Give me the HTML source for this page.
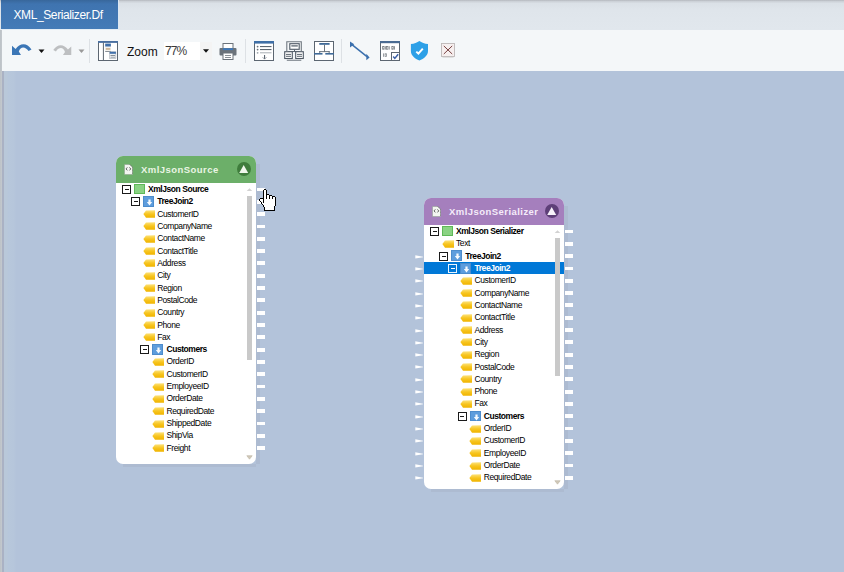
<!DOCTYPE html><html><head><meta charset="utf-8"><style>

*{margin:0;padding:0;box-sizing:border-box}
html,body{width:844px;height:572px;overflow:hidden}
body{position:relative;background:#b3c3da;font-family:"Liberation Sans",sans-serif}
.abs{position:absolute}
#topbar{position:absolute;left:0;top:0;width:844px;height:30px;background:linear-gradient(#b4b8be 0px,#cdd2d8 1.5px,#dbe1e7 3.5px,#dfe5eb 10px,#e1e7ed 29px)}
#tab{position:absolute;left:1px;top:0;width:118px;height:30px;background:linear-gradient(#38679b 0px,#3f74b0 4px,#4278b4 20px,#447bb7 29px);border-right:1px solid #dbe7f3;border-bottom:1px solid #e4edf5;padding-top:0;color:#fff;font-size:12px;line-height:31px;padding-left:12.5px;letter-spacing:-0.4px}
#toolbar{position:absolute;left:0;top:30px;width:844px;height:41px;background:#f4f7f9}
#lstrip{position:absolute;left:0;top:30px;width:2px;height:542px;background:linear-gradient(90deg,#bcc2c7 0px,#c2c7cc 1.5px,#c2c7cc 2px)}
#canvasl{position:absolute;left:2px;top:71px;width:14px;height:501px;background:linear-gradient(90deg,#aab2c4 0px,#aab2c4 1.5px,#b9c8d9 2px,#b9c8d9 5px,#b7c7db 6px,#b6c6db 12px,#b3c3da 14px)}
.sep{position:absolute;top:39px;width:1px;height:24px;background:#dde1e5}
.node{position:absolute;background:#fff;border-radius:7px;overflow:hidden}
.hdr{position:absolute;left:0;top:0;width:100%;height:27px}
.doc{position:absolute;left:8.3px;top:7.5px}
.ttl{position:absolute;left:25px;top:0;height:27px;line-height:27px;font-weight:bold;font-size:9.5px;letter-spacing:0.45px}
.btn{position:absolute;right:5px;top:6px;width:14px;height:14px;border-radius:7px}
.btn svg{position:absolute;left:0;top:0}
.shr{position:absolute;width:3.5px;background:#adbbd1}
.shb{position:absolute;height:3px;background:#adbbd1}
.row{position:absolute;left:0;width:100%;height:12.32px}
.tx{position:absolute;top:0;font-size:8.5px;line-height:12.32px;color:#000;white-space:nowrap;letter-spacing:-0.4px}
.row.b .tx{font-weight:bold;font-size:8.5px;letter-spacing:-0.45px}
.row.s .tx{color:#fff;-webkit-text-stroke:0}
.cb{position:absolute;top:2px;width:9px;height:9px;border:1px solid #1a1a1a;background:#fff}
.cb::after{content:"";position:absolute;left:1.5px;top:3px;width:4px;height:1px;background:#1a1a1a}
.row.s .cb{border-color:#e8f4ff;background:#0078d7}
.row.s .cb::after{background:#fff}
.ig{position:absolute;top:0.9px;width:10.6px;height:10.6px;background:#8ad283;border:1px solid #5fb858}
.ib{position:absolute;top:0.8px;width:10.8px;height:10.8px;background:#5e9ddd;border:0.6px solid #4d8ccc}
.ib svg{position:absolute;left:0;top:0}
.il{position:absolute;top:2.5px;width:12px;height:8px}
.il svg{position:absolute;left:0;top:0}
.sel{position:absolute;left:0;width:100%;height:12.32px;background:#0078d7}
.thumb{position:absolute;width:5px;background:#c9c9c9}
.sa{position:absolute}
.pr{position:absolute;width:8.3px;height:3.8px;background:#fff}
.pl{position:absolute}

</style></head><body>
<svg width="0" height="0" style="position:absolute"><defs><linearGradient id="yg" x1="0" y1="0" x2="0" y2="1"><stop offset="0" stop-color="#fde27a"/><stop offset="0.5" stop-color="#f7c520"/><stop offset="1" stop-color="#f0b400"/></linearGradient></defs></svg>
<div id="topbar"></div>
<div id="tab">XML_Serializer.Df</div>
<div id="toolbar"></div>
<div id="canvasl"></div>
<div id="lstrip"></div>
<svg class="abs" style="left:11px;top:43px" width="21" height="13" viewBox="0 0 21 13"><path d="M1,2.8 L4.6,6 C8.5,0.3 15.8,-1.2 20.5,6.6 L17.6,8 C14,3 9.5,3.4 7.8,8.6 L10,12 L1,12 Z" fill="#3b76b6"/></svg>
<svg class="abs" style="left:38px;top:49px" width="7" height="5" viewBox="0 0 7 5"><path d="M0.5,0.5 H6.5 L3.5,4 Z" fill="#111"/></svg>
<svg class="abs" style="left:52px;top:44px" width="21" height="12" viewBox="0 0 21 13"><path d="M20,2.8 L16.4,6 C12.5,0.3 5.2,-1.2 0.5,6.6 L3.4,8 C7,3 11.5,3.4 13.2,8.6 L11,12 L20,12 Z" fill="#bdbfc1"/></svg>
<svg class="abs" style="left:78px;top:49px" width="7" height="5" viewBox="0 0 7 5"><path d="M0.5,0.5 H6.5 L3.5,4 Z" fill="#9a9a9a"/></svg>
<div class="sep" style="left:89px"></div>
<svg class="abs" style="left:98px;top:41px" width="20" height="20" viewBox="0 0 20 20"><rect x="0.5" y="0.5" width="19" height="19" fill="#fff" stroke="#5c6671"/><rect x="0" y="0" width="20" height="1.9" fill="#4a6fa0"/><rect x="4.9" y="1.5" width="1" height="18" fill="#5c6671"/><rect x="7.2" y="2.6" width="5.7" height="8" fill="#f4f1ec"/><rect x="7.2" y="2.6" width="5.7" height="2.9" fill="#4170aa"/><rect x="7.8" y="7.2" width="4.5" height="1.5" fill="#c9ab86"/><rect x="7.2" y="10" width="5.7" height="0.8" fill="#6f7880"/><rect x="11.7" y="10.8" width="6.2" height="6.8" fill="#eef1f4" stroke="#9aa2aa" stroke-width="0.5"/><rect x="11.7" y="10.8" width="6.2" height="2" fill="#4170aa"/><rect x="12.5" y="14" width="4.6" height="0.8" fill="#6f7880"/><rect x="12.5" y="15.8" width="4.6" height="0.8" fill="#8a929a"/></svg>
<div class="abs" style="left:127px;top:42.5px;font-size:12px;line-height:18px;color:#111">Zoom</div>
<div class="abs" style="left:164px;top:42px;width:48px;height:18px;background:#fff"></div>
<div class="abs" style="left:200px;top:42px;width:12px;height:18px;background:#f4f4f4"></div>
<div class="abs" style="left:165px;top:42px;font-size:12px;line-height:18px;color:#3a3a3a;letter-spacing:-0.9px">77%</div>
<svg class="abs" style="left:203px;top:49px" width="6" height="4" viewBox="0 0 6 4"><path d="M0,0.3 H6 L3,3.8 Z" fill="#111"/></svg>
<svg class="abs" style="left:219px;top:43px" width="18" height="17" viewBox="0 0 18 17"><rect x="4" y="0.5" width="10" height="5" fill="#fff" stroke="#6b737b"/><rect x="0.5" y="5" width="17" height="7.5" rx="1" fill="#6b737b"/><rect x="4" y="5.3" width="10" height="1.8" fill="#3b78bb"/><rect x="4" y="10" width="10" height="6.5" fill="#fff" stroke="#6b737b"/><line x1="6" y1="12.5" x2="12" y2="12.5" stroke="#6b737b" stroke-width="0.8"/><line x1="6" y1="14.5" x2="12" y2="14.5" stroke="#6b737b" stroke-width="0.8"/></svg>
<div class="sep" style="left:245px"></div>
<svg class="abs" style="left:254px;top:41px" width="20" height="20" viewBox="0 0 20 20"><rect x="0.5" y="0.5" width="19" height="19" fill="#fff" stroke="#5c6671"/><rect x="0" y="0" width="20" height="2.6" fill="#3f6fa6"/><circle cx="3.6" cy="5.6" r="0.9" fill="#6a737c"/><rect x="6" y="5" width="11.5" height="1.1" fill="#5c6671"/><circle cx="3.6" cy="8.6" r="0.9" fill="#6a737c"/><rect x="6" y="8" width="11.5" height="1.1" fill="#5c6671"/><circle cx="3.6" cy="11.8" r="0.9" fill="#9aa2aa"/><rect x="6" y="11.3" width="11.5" height="1" fill="#a8aeb4"/><rect x="10" y="14" width="1.1" height="4" fill="#5c6671"/><path d="M8.6,16.2 L10.55,18.2 L12.5,16.2" fill="none" stroke="#7a838c" stroke-width="0.7"/></svg>
<svg class="abs" style="left:284px;top:41px" width="20" height="20" viewBox="0 0 20 20"><path d="M2.8,10 V0.8 H17.3 V10 M2.8,19.3 H17.3" fill="none" stroke="#6f7880" stroke-width="1.1"/><rect x="5.8" y="2.7" width="9.4" height="5.6" fill="#fff" stroke="#4f5a65" stroke-width="1.1"/><rect x="7.3" y="4.3" width="6.5" height="1.2" fill="#4f5a65"/><path d="M10.5,8.3 V10.5 M4.3,10.5 H15.7" fill="none" stroke="#5c6671" stroke-width="1"/><rect x="0.7" y="10.7" width="7.6" height="6.8" fill="#fff" stroke="#4f5a65" stroke-width="1.1"/><rect x="11.7" y="10.7" width="7.6" height="6.8" fill="#fff" stroke="#4f5a65" stroke-width="1.1"/><rect x="2" y="12.9" width="5" height="1" fill="#5c6671"/><rect x="2" y="14.8" width="5" height="1" fill="#5c6671"/><rect x="13" y="12.9" width="5" height="1" fill="#5c6671"/><rect x="13" y="14.8" width="5" height="1" fill="#5c6671"/></svg>
<svg class="abs" style="left:314px;top:41px" width="20" height="20" viewBox="0 0 20 20"><rect x="0.5" y="0.5" width="19" height="19" fill="#fff" stroke="#5c6671"/><rect x="5.3" y="2" width="10.3" height="1.8" fill="#3f6a98"/><rect x="10" y="3.7" width="0.9" height="7" fill="#5c6671"/><rect x="5.3" y="10.2" width="10.3" height="0.9" fill="#5c6671"/><rect x="5.3" y="10.2" width="0.9" height="2" fill="#5c6671"/><rect x="14.7" y="10.2" width="0.9" height="2" fill="#5c6671"/><rect x="0" y="12" width="8.5" height="1.6" fill="#3f6a98"/><rect x="11.3" y="12" width="8.7" height="1.6" fill="#3f6a98"/></svg>
<div class="sep" style="left:341px"></div>
<svg class="abs" style="left:349px;top:41px" width="21" height="20" viewBox="0 0 21 20"><line x1="3" y1="3.6" x2="18" y2="15.6" stroke="#3a6fad" stroke-width="1.5"/><path d="M1,0.5 L1,6.5 L5.2,3.2 Z" fill="#3a6fad"/><path d="M17.3,12.8 L17.3,19.2 L20.6,16.4 Z" fill="#3a6fad"/></svg>
<svg class="abs" style="left:380px;top:41px" width="20" height="20" viewBox="0 0 20 20"><rect x="0.5" y="0.5" width="19" height="19" fill="#fff" stroke="#5c6671"/><rect x="0" y="0" width="20" height="2.2" fill="#4a6b92"/><rect x="2.65" y="5.55" width="1.4" height="2.7" fill="none" stroke="#70767c" stroke-width="0.75"/><rect x="4.8999999999999995" y="5.2" width="0.8" height="3.4" fill="#70767c"/><rect x="6.55" y="5.55" width="1.4" height="2.7" fill="none" stroke="#70767c" stroke-width="0.75"/><rect x="8.8" y="5.2" width="0.8" height="3.4" fill="#70767c"/><rect x="11.85" y="5.55" width="1.4" height="2.7" fill="none" stroke="#70767c" stroke-width="0.75"/><rect x="14.100000000000001" y="5.2" width="0.8" height="3.4" fill="#70767c"/><rect x="3" y="12.4" width="0.8" height="3.4" fill="#80868c"/><rect x="5.05" y="12.75" width="1.4" height="2.7" fill="none" stroke="#80868c" stroke-width="0.75"/><rect x="11.5" y="11.5" width="8" height="8" fill="#fff" stroke="#5c6671"/><path d="M13.2,15.6 L14.8,17.4 L18.2,13.2" fill="none" stroke="#3b5fa6" stroke-width="1.5"/></svg>
<svg class="abs" style="left:410px;top:41px" width="19" height="20" viewBox="0 0 19 20"><path d="M9.4,0 C11.5,1.6 14.8,2.8 18,3 V10 C18,14.5 13.8,17.8 9.4,19.6 C5,17.8 0.9,14.5 0.9,10 V3 C4.1,2.8 7.3,1.6 9.4,0 Z" fill="#2da0e7"/><path d="M6.3,10.6 L8.4,12.6 L12.8,7.6" fill="none" stroke="#fff" stroke-width="2"/></svg>
<svg class="abs" style="left:441px;top:43px" width="14" height="15" viewBox="0 0 14 15"><rect x="0.5" y="0.5" width="13" height="13" fill="#f6efef" stroke="#bdb8b8" stroke-width="0.9"/><path d="M2.8,2.9 L11.2,11 M11.2,2.9 L2.8,11" stroke="#6b2f2f" stroke-width="0.9"/><line x1="1.5" y1="14.4" x2="12.5" y2="14.4" stroke="#d6d6d6" stroke-width="0.8"/></svg>
<div class="shr" style="left:256px;top:164px;height:299.5px"></div>
<div class="shb" style="left:123px;top:463.5px;width:133px"></div>
<div class="node" style="left:116px;top:156px;width:140px;height:307.5px">
<div class="hdr" style="background:#6caf69">
<svg class="doc" width="9" height="11" viewBox="0 0 9 11"><path d="M0.5,0.5 H5.8 L8.5,3.2 V10.5 H0.5 Z" fill="#f3f5f1" stroke="#8a9a88" stroke-width="0.5"/><path d="M5.8,0.5 L8.5,3.2" stroke="#555" stroke-width="0.7" stroke-dasharray="0.8,0.6"/><path d="M8.5,3.2 V10.5" stroke="#6a6f6a" stroke-width="0.6" stroke-dasharray="0.8,0.7"/><path d="M3.3,3.4 L2.1,4.9 L3.3,6.4 M5.5,3.4 L6.7,4.9 L5.5,6.4" fill="none" stroke="#3a3a3a" stroke-width="0.8"/></svg>
<div class="ttl" style="color:#eaf5e4">XmlJsonSource</div>
<div class="btn" style="background:#3f7d3c"><svg width="14" height="14" viewBox="0 0 14 14"><path d="M6.7,2.9 L11.2,11 L2.2,11 Z" fill="#f0f7ec"/></svg></div>
</div>
<div class="row b" style="top:27.00px">
<div class="cb" style="left:6.00px"></div>
<div class="ig" style="left:18.00px"></div>
<div class="tx" style="left:32.00px">XmlJson Source</div>
</div>
<div class="row b" style="top:39.32px">
<div class="cb" style="left:15.24px"></div>
<div class="ib" style="left:27.24px"><svg width="11" height="11" viewBox="0 0 11 11"><path d="M4.4,2.6 H6.6 V5 H8.2 L5.5,8.4 L2.8,5 H4.4 Z" fill="#fff" opacity="0.95"/></svg></div>
<div class="tx" style="left:41.24px">TreeJoin2</div>
</div>
<div class="row" style="top:51.64px">
<div class="il" style="left:26.84px"><svg class="lf" width="12" height="8" viewBox="0 0 12 8"><path d="M0.4,3.9 L3,0.4 L12,0.3 L12,7.7 L3,7.7 Z" fill="url(#yg)"/></svg></div>
<div class="tx" style="left:41.24px">CustomerID</div>
</div>
<div class="row" style="top:63.96px">
<div class="il" style="left:26.84px"><svg class="lf" width="12" height="8" viewBox="0 0 12 8"><path d="M0.4,3.9 L3,0.4 L12,0.3 L12,7.7 L3,7.7 Z" fill="url(#yg)"/></svg></div>
<div class="tx" style="left:41.24px">CompanyName</div>
</div>
<div class="row" style="top:76.28px">
<div class="il" style="left:26.84px"><svg class="lf" width="12" height="8" viewBox="0 0 12 8"><path d="M0.4,3.9 L3,0.4 L12,0.3 L12,7.7 L3,7.7 Z" fill="url(#yg)"/></svg></div>
<div class="tx" style="left:41.24px">ContactName</div>
</div>
<div class="row" style="top:88.60px">
<div class="il" style="left:26.84px"><svg class="lf" width="12" height="8" viewBox="0 0 12 8"><path d="M0.4,3.9 L3,0.4 L12,0.3 L12,7.7 L3,7.7 Z" fill="url(#yg)"/></svg></div>
<div class="tx" style="left:41.24px">ContactTitle</div>
</div>
<div class="row" style="top:100.92px">
<div class="il" style="left:26.84px"><svg class="lf" width="12" height="8" viewBox="0 0 12 8"><path d="M0.4,3.9 L3,0.4 L12,0.3 L12,7.7 L3,7.7 Z" fill="url(#yg)"/></svg></div>
<div class="tx" style="left:41.24px">Address</div>
</div>
<div class="row" style="top:113.24px">
<div class="il" style="left:26.84px"><svg class="lf" width="12" height="8" viewBox="0 0 12 8"><path d="M0.4,3.9 L3,0.4 L12,0.3 L12,7.7 L3,7.7 Z" fill="url(#yg)"/></svg></div>
<div class="tx" style="left:41.24px">City</div>
</div>
<div class="row" style="top:125.56px">
<div class="il" style="left:26.84px"><svg class="lf" width="12" height="8" viewBox="0 0 12 8"><path d="M0.4,3.9 L3,0.4 L12,0.3 L12,7.7 L3,7.7 Z" fill="url(#yg)"/></svg></div>
<div class="tx" style="left:41.24px">Region</div>
</div>
<div class="row" style="top:137.88px">
<div class="il" style="left:26.84px"><svg class="lf" width="12" height="8" viewBox="0 0 12 8"><path d="M0.4,3.9 L3,0.4 L12,0.3 L12,7.7 L3,7.7 Z" fill="url(#yg)"/></svg></div>
<div class="tx" style="left:41.24px">PostalCode</div>
</div>
<div class="row" style="top:150.20px">
<div class="il" style="left:26.84px"><svg class="lf" width="12" height="8" viewBox="0 0 12 8"><path d="M0.4,3.9 L3,0.4 L12,0.3 L12,7.7 L3,7.7 Z" fill="url(#yg)"/></svg></div>
<div class="tx" style="left:41.24px">Country</div>
</div>
<div class="row" style="top:162.52px">
<div class="il" style="left:26.84px"><svg class="lf" width="12" height="8" viewBox="0 0 12 8"><path d="M0.4,3.9 L3,0.4 L12,0.3 L12,7.7 L3,7.7 Z" fill="url(#yg)"/></svg></div>
<div class="tx" style="left:41.24px">Phone</div>
</div>
<div class="row" style="top:174.84px">
<div class="il" style="left:26.84px"><svg class="lf" width="12" height="8" viewBox="0 0 12 8"><path d="M0.4,3.9 L3,0.4 L12,0.3 L12,7.7 L3,7.7 Z" fill="url(#yg)"/></svg></div>
<div class="tx" style="left:41.24px">Fax</div>
</div>
<div class="row b" style="top:187.16px">
<div class="cb" style="left:24.48px"></div>
<div class="ib" style="left:36.48px"><svg width="11" height="11" viewBox="0 0 11 11"><path d="M4.4,2.6 H6.6 V5 H8.2 L5.5,8.4 L2.8,5 H4.4 Z" fill="#fff" opacity="0.95"/></svg></div>
<div class="tx" style="left:50.48px">Customers</div>
</div>
<div class="row" style="top:199.48px">
<div class="il" style="left:36.08px"><svg class="lf" width="12" height="8" viewBox="0 0 12 8"><path d="M0.4,3.9 L3,0.4 L12,0.3 L12,7.7 L3,7.7 Z" fill="url(#yg)"/></svg></div>
<div class="tx" style="left:50.48px">OrderID</div>
</div>
<div class="row" style="top:211.80px">
<div class="il" style="left:36.08px"><svg class="lf" width="12" height="8" viewBox="0 0 12 8"><path d="M0.4,3.9 L3,0.4 L12,0.3 L12,7.7 L3,7.7 Z" fill="url(#yg)"/></svg></div>
<div class="tx" style="left:50.48px">CustomerID</div>
</div>
<div class="row" style="top:224.12px">
<div class="il" style="left:36.08px"><svg class="lf" width="12" height="8" viewBox="0 0 12 8"><path d="M0.4,3.9 L3,0.4 L12,0.3 L12,7.7 L3,7.7 Z" fill="url(#yg)"/></svg></div>
<div class="tx" style="left:50.48px">EmployeeID</div>
</div>
<div class="row" style="top:236.44px">
<div class="il" style="left:36.08px"><svg class="lf" width="12" height="8" viewBox="0 0 12 8"><path d="M0.4,3.9 L3,0.4 L12,0.3 L12,7.7 L3,7.7 Z" fill="url(#yg)"/></svg></div>
<div class="tx" style="left:50.48px">OrderDate</div>
</div>
<div class="row" style="top:248.76px">
<div class="il" style="left:36.08px"><svg class="lf" width="12" height="8" viewBox="0 0 12 8"><path d="M0.4,3.9 L3,0.4 L12,0.3 L12,7.7 L3,7.7 Z" fill="url(#yg)"/></svg></div>
<div class="tx" style="left:50.48px">RequiredDate</div>
</div>
<div class="row" style="top:261.08px">
<div class="il" style="left:36.08px"><svg class="lf" width="12" height="8" viewBox="0 0 12 8"><path d="M0.4,3.9 L3,0.4 L12,0.3 L12,7.7 L3,7.7 Z" fill="url(#yg)"/></svg></div>
<div class="tx" style="left:50.48px">ShippedDate</div>
</div>
<div class="row" style="top:273.40px">
<div class="il" style="left:36.08px"><svg class="lf" width="12" height="8" viewBox="0 0 12 8"><path d="M0.4,3.9 L3,0.4 L12,0.3 L12,7.7 L3,7.7 Z" fill="url(#yg)"/></svg></div>
<div class="tx" style="left:50.48px">ShipVia</div>
</div>
<div class="row" style="top:285.72px">
<div class="il" style="left:36.08px"><svg class="lf" width="12" height="8" viewBox="0 0 12 8"><path d="M0.4,3.9 L3,0.4 L12,0.3 L12,7.7 L3,7.7 Z" fill="url(#yg)"/></svg></div>
<div class="tx" style="left:50.48px">Freight</div>
</div>
<svg class="sa" style="left:130px;top:31px" width="7" height="5" viewBox="0 0 7 5"><path d="M3.5,1.3 L6.3,4.1 L0.7,4.1 Z" fill="#d2d2d2"/></svg>
<div class="thumb" style="left:131px;top:40px;height:164px"></div>
<svg class="sa" style="left:130px;top:298.5px" width="7" height="5" viewBox="0 0 7 5"><path d="M0.8,0.7 L6.2,0.7 L3.5,4.2 Z" fill="#d0c8b8" stroke="#bdb5a5" stroke-width="0.6"/></svg>
</div>
<div class="pr" style="left:256.7px;top:187.56px"></div>
<div class="pr" style="left:256.7px;top:199.88px"></div>
<div class="pr" style="left:256.7px;top:212.20px"></div>
<div class="pr" style="left:256.7px;top:224.52px"></div>
<div class="pr" style="left:256.7px;top:236.84px"></div>
<div class="pr" style="left:256.7px;top:249.16px"></div>
<div class="pr" style="left:256.7px;top:261.48px"></div>
<div class="pr" style="left:256.7px;top:273.80px"></div>
<div class="pr" style="left:256.7px;top:286.12px"></div>
<div class="pr" style="left:256.7px;top:298.44px"></div>
<div class="pr" style="left:256.7px;top:310.76px"></div>
<div class="pr" style="left:256.7px;top:323.08px"></div>
<div class="pr" style="left:256.7px;top:335.40px"></div>
<div class="pr" style="left:256.7px;top:347.72px"></div>
<div class="pr" style="left:256.7px;top:360.04px"></div>
<div class="pr" style="left:256.7px;top:372.36px"></div>
<div class="pr" style="left:256.7px;top:384.68px"></div>
<div class="pr" style="left:256.7px;top:397.00px"></div>
<div class="pr" style="left:256.7px;top:409.32px"></div>
<div class="pr" style="left:256.7px;top:421.64px"></div>
<div class="pr" style="left:256.7px;top:433.96px"></div>
<div class="pr" style="left:256.7px;top:446.28px"></div>
<div class="shr" style="left:564px;top:206px;height:282.5px"></div>
<div class="shb" style="left:431px;top:488.5px;width:133px"></div>
<div class="node" style="left:424px;top:198px;width:140px;height:290.5px">
<div class="hdr" style="background:#a57fbd">
<svg class="doc" width="9" height="11" viewBox="0 0 9 11"><path d="M0.5,0.5 H5.8 L8.5,3.2 V10.5 H0.5 Z" fill="#f3f5f1" stroke="#8a9a88" stroke-width="0.5"/><path d="M5.8,0.5 L8.5,3.2" stroke="#555" stroke-width="0.7" stroke-dasharray="0.8,0.6"/><path d="M8.5,3.2 V10.5" stroke="#6a6f6a" stroke-width="0.6" stroke-dasharray="0.8,0.7"/><path d="M3.3,3.4 L2.1,4.9 L3.3,6.4 M5.5,3.4 L6.7,4.9 L5.5,6.4" fill="none" stroke="#3a3a3a" stroke-width="0.8"/></svg>
<div class="ttl" style="color:#f5ecfa">XmlJsonSerializer</div>
<div class="btn" style="background:#5e3f78"><svg width="14" height="14" viewBox="0 0 14 14"><path d="M6.7,2.9 L11.2,11 L2.2,11 Z" fill="#f7f2fa"/></svg></div>
</div>
<div class="sel" style="top:63.96px"></div>
<div class="row b" style="top:27.00px">
<div class="cb" style="left:6.00px"></div>
<div class="ig" style="left:18.00px"></div>
<div class="tx" style="left:32.00px">XmlJson Serializer</div>
</div>
<div class="row" style="top:39.32px">
<div class="il" style="left:17.60px"><svg class="lf" width="12" height="8" viewBox="0 0 12 8"><path d="M0.4,3.9 L3,0.4 L12,0.3 L12,7.7 L3,7.7 Z" fill="url(#yg)"/></svg></div>
<div class="tx" style="left:32.00px">Text</div>
</div>
<div class="row b" style="top:51.64px">
<div class="cb" style="left:15.24px"></div>
<div class="ib" style="left:27.24px"><svg width="11" height="11" viewBox="0 0 11 11"><path d="M4.4,2.6 H6.6 V5 H8.2 L5.5,8.4 L2.8,5 H4.4 Z" fill="#fff" opacity="0.95"/></svg></div>
<div class="tx" style="left:41.24px">TreeJoin2</div>
</div>
<div class="row b s" style="top:63.96px">
<div class="cb" style="left:24.48px"></div>
<div class="ib" style="left:36.48px"><svg width="11" height="11" viewBox="0 0 11 11"><path d="M4.4,2.6 H6.6 V5 H8.2 L5.5,8.4 L2.8,5 H4.4 Z" fill="#fff" opacity="0.95"/></svg></div>
<div class="tx" style="left:50.48px">TreeJoin2</div>
</div>
<div class="row" style="top:76.28px">
<div class="il" style="left:36.08px"><svg class="lf" width="12" height="8" viewBox="0 0 12 8"><path d="M0.4,3.9 L3,0.4 L12,0.3 L12,7.7 L3,7.7 Z" fill="url(#yg)"/></svg></div>
<div class="tx" style="left:50.48px">CustomerID</div>
</div>
<div class="row" style="top:88.60px">
<div class="il" style="left:36.08px"><svg class="lf" width="12" height="8" viewBox="0 0 12 8"><path d="M0.4,3.9 L3,0.4 L12,0.3 L12,7.7 L3,7.7 Z" fill="url(#yg)"/></svg></div>
<div class="tx" style="left:50.48px">CompanyName</div>
</div>
<div class="row" style="top:100.92px">
<div class="il" style="left:36.08px"><svg class="lf" width="12" height="8" viewBox="0 0 12 8"><path d="M0.4,3.9 L3,0.4 L12,0.3 L12,7.7 L3,7.7 Z" fill="url(#yg)"/></svg></div>
<div class="tx" style="left:50.48px">ContactName</div>
</div>
<div class="row" style="top:113.24px">
<div class="il" style="left:36.08px"><svg class="lf" width="12" height="8" viewBox="0 0 12 8"><path d="M0.4,3.9 L3,0.4 L12,0.3 L12,7.7 L3,7.7 Z" fill="url(#yg)"/></svg></div>
<div class="tx" style="left:50.48px">ContactTitle</div>
</div>
<div class="row" style="top:125.56px">
<div class="il" style="left:36.08px"><svg class="lf" width="12" height="8" viewBox="0 0 12 8"><path d="M0.4,3.9 L3,0.4 L12,0.3 L12,7.7 L3,7.7 Z" fill="url(#yg)"/></svg></div>
<div class="tx" style="left:50.48px">Address</div>
</div>
<div class="row" style="top:137.88px">
<div class="il" style="left:36.08px"><svg class="lf" width="12" height="8" viewBox="0 0 12 8"><path d="M0.4,3.9 L3,0.4 L12,0.3 L12,7.7 L3,7.7 Z" fill="url(#yg)"/></svg></div>
<div class="tx" style="left:50.48px">City</div>
</div>
<div class="row" style="top:150.20px">
<div class="il" style="left:36.08px"><svg class="lf" width="12" height="8" viewBox="0 0 12 8"><path d="M0.4,3.9 L3,0.4 L12,0.3 L12,7.7 L3,7.7 Z" fill="url(#yg)"/></svg></div>
<div class="tx" style="left:50.48px">Region</div>
</div>
<div class="row" style="top:162.52px">
<div class="il" style="left:36.08px"><svg class="lf" width="12" height="8" viewBox="0 0 12 8"><path d="M0.4,3.9 L3,0.4 L12,0.3 L12,7.7 L3,7.7 Z" fill="url(#yg)"/></svg></div>
<div class="tx" style="left:50.48px">PostalCode</div>
</div>
<div class="row" style="top:174.84px">
<div class="il" style="left:36.08px"><svg class="lf" width="12" height="8" viewBox="0 0 12 8"><path d="M0.4,3.9 L3,0.4 L12,0.3 L12,7.7 L3,7.7 Z" fill="url(#yg)"/></svg></div>
<div class="tx" style="left:50.48px">Country</div>
</div>
<div class="row" style="top:187.16px">
<div class="il" style="left:36.08px"><svg class="lf" width="12" height="8" viewBox="0 0 12 8"><path d="M0.4,3.9 L3,0.4 L12,0.3 L12,7.7 L3,7.7 Z" fill="url(#yg)"/></svg></div>
<div class="tx" style="left:50.48px">Phone</div>
</div>
<div class="row" style="top:199.48px">
<div class="il" style="left:36.08px"><svg class="lf" width="12" height="8" viewBox="0 0 12 8"><path d="M0.4,3.9 L3,0.4 L12,0.3 L12,7.7 L3,7.7 Z" fill="url(#yg)"/></svg></div>
<div class="tx" style="left:50.48px">Fax</div>
</div>
<div class="row b" style="top:211.80px">
<div class="cb" style="left:33.72px"></div>
<div class="ib" style="left:45.72px"><svg width="11" height="11" viewBox="0 0 11 11"><path d="M4.4,2.6 H6.6 V5 H8.2 L5.5,8.4 L2.8,5 H4.4 Z" fill="#fff" opacity="0.95"/></svg></div>
<div class="tx" style="left:59.72px">Customers</div>
</div>
<div class="row" style="top:224.12px">
<div class="il" style="left:45.32px"><svg class="lf" width="12" height="8" viewBox="0 0 12 8"><path d="M0.4,3.9 L3,0.4 L12,0.3 L12,7.7 L3,7.7 Z" fill="url(#yg)"/></svg></div>
<div class="tx" style="left:59.72px">OrderID</div>
</div>
<div class="row" style="top:236.44px">
<div class="il" style="left:45.32px"><svg class="lf" width="12" height="8" viewBox="0 0 12 8"><path d="M0.4,3.9 L3,0.4 L12,0.3 L12,7.7 L3,7.7 Z" fill="url(#yg)"/></svg></div>
<div class="tx" style="left:59.72px">CustomerID</div>
</div>
<div class="row" style="top:248.76px">
<div class="il" style="left:45.32px"><svg class="lf" width="12" height="8" viewBox="0 0 12 8"><path d="M0.4,3.9 L3,0.4 L12,0.3 L12,7.7 L3,7.7 Z" fill="url(#yg)"/></svg></div>
<div class="tx" style="left:59.72px">EmployeeID</div>
</div>
<div class="row" style="top:261.08px">
<div class="il" style="left:45.32px"><svg class="lf" width="12" height="8" viewBox="0 0 12 8"><path d="M0.4,3.9 L3,0.4 L12,0.3 L12,7.7 L3,7.7 Z" fill="url(#yg)"/></svg></div>
<div class="tx" style="left:59.72px">OrderDate</div>
</div>
<div class="row" style="top:273.40px">
<div class="il" style="left:45.32px"><svg class="lf" width="12" height="8" viewBox="0 0 12 8"><path d="M0.4,3.9 L3,0.4 L12,0.3 L12,7.7 L3,7.7 Z" fill="url(#yg)"/></svg></div>
<div class="tx" style="left:59.72px">RequiredDate</div>
</div>
<svg class="sa" style="left:130px;top:31px" width="7" height="5" viewBox="0 0 7 5"><path d="M3.5,1.3 L6.3,4.1 L0.7,4.1 Z" fill="#d2d2d2"/></svg>
<div class="thumb" style="left:131px;top:40px;height:138px"></div>
<svg class="sa" style="left:130px;top:281.5px" width="7" height="5" viewBox="0 0 7 5"><path d="M0.8,0.7 L6.2,0.7 L3.5,4.2 Z" fill="#d0c8b8" stroke="#bdb5a5" stroke-width="0.6"/></svg>
</div>
<div class="pr" style="left:564.7px;top:229.56px"></div>
<div class="pr" style="left:564.7px;top:241.88px"></div>
<div class="pr" style="left:564.7px;top:254.20px"></div>
<div class="pr" style="left:564.7px;top:266.52px"></div>
<div class="pr" style="left:564.7px;top:278.84px"></div>
<div class="pr" style="left:564.7px;top:291.16px"></div>
<div class="pr" style="left:564.7px;top:303.48px"></div>
<div class="pr" style="left:564.7px;top:315.80px"></div>
<div class="pr" style="left:564.7px;top:328.12px"></div>
<div class="pr" style="left:564.7px;top:340.44px"></div>
<div class="pr" style="left:564.7px;top:352.76px"></div>
<div class="pr" style="left:564.7px;top:365.08px"></div>
<div class="pr" style="left:564.7px;top:377.40px"></div>
<div class="pr" style="left:564.7px;top:389.72px"></div>
<div class="pr" style="left:564.7px;top:402.04px"></div>
<div class="pr" style="left:564.7px;top:414.36px"></div>
<div class="pr" style="left:564.7px;top:426.68px"></div>
<div class="pr" style="left:564.7px;top:439.00px"></div>
<div class="pr" style="left:564.7px;top:451.32px"></div>
<div class="pr" style="left:564.7px;top:463.64px"></div>
<div class="pr" style="left:564.7px;top:475.96px"></div>
<svg class="pl" style="left:414.5px;top:254.60px" width="9" height="4" viewBox="0 0 9 4"><path d="M0.3,0.2 L8,1.7 L8,2.3 L0.3,3.5 Z" fill="#fff"/></svg>
<svg class="pl" style="left:414.5px;top:266.92px" width="9" height="4" viewBox="0 0 9 4"><path d="M0.3,0.2 L8,1.7 L8,2.3 L0.3,3.5 Z" fill="#fff"/></svg>
<svg class="pl" style="left:414.5px;top:279.24px" width="9" height="4" viewBox="0 0 9 4"><path d="M0.3,0.2 L8,1.7 L8,2.3 L0.3,3.5 Z" fill="#fff"/></svg>
<svg class="pl" style="left:414.5px;top:291.56px" width="9" height="4" viewBox="0 0 9 4"><path d="M0.3,0.2 L8,1.7 L8,2.3 L0.3,3.5 Z" fill="#fff"/></svg>
<svg class="pl" style="left:414.5px;top:303.88px" width="9" height="4" viewBox="0 0 9 4"><path d="M0.3,0.2 L8,1.7 L8,2.3 L0.3,3.5 Z" fill="#fff"/></svg>
<svg class="pl" style="left:414.5px;top:316.20px" width="9" height="4" viewBox="0 0 9 4"><path d="M0.3,0.2 L8,1.7 L8,2.3 L0.3,3.5 Z" fill="#fff"/></svg>
<svg class="pl" style="left:414.5px;top:328.52px" width="9" height="4" viewBox="0 0 9 4"><path d="M0.3,0.2 L8,1.7 L8,2.3 L0.3,3.5 Z" fill="#fff"/></svg>
<svg class="pl" style="left:414.5px;top:340.84px" width="9" height="4" viewBox="0 0 9 4"><path d="M0.3,0.2 L8,1.7 L8,2.3 L0.3,3.5 Z" fill="#fff"/></svg>
<svg class="pl" style="left:414.5px;top:353.16px" width="9" height="4" viewBox="0 0 9 4"><path d="M0.3,0.2 L8,1.7 L8,2.3 L0.3,3.5 Z" fill="#fff"/></svg>
<svg class="pl" style="left:414.5px;top:365.48px" width="9" height="4" viewBox="0 0 9 4"><path d="M0.3,0.2 L8,1.7 L8,2.3 L0.3,3.5 Z" fill="#fff"/></svg>
<svg class="pl" style="left:414.5px;top:377.80px" width="9" height="4" viewBox="0 0 9 4"><path d="M0.3,0.2 L8,1.7 L8,2.3 L0.3,3.5 Z" fill="#fff"/></svg>
<svg class="pl" style="left:414.5px;top:390.12px" width="9" height="4" viewBox="0 0 9 4"><path d="M0.3,0.2 L8,1.7 L8,2.3 L0.3,3.5 Z" fill="#fff"/></svg>
<svg class="pl" style="left:414.5px;top:402.44px" width="9" height="4" viewBox="0 0 9 4"><path d="M0.3,0.2 L8,1.7 L8,2.3 L0.3,3.5 Z" fill="#fff"/></svg>
<svg class="pl" style="left:414.5px;top:414.76px" width="9" height="4" viewBox="0 0 9 4"><path d="M0.3,0.2 L8,1.7 L8,2.3 L0.3,3.5 Z" fill="#fff"/></svg>
<svg class="pl" style="left:414.5px;top:427.08px" width="9" height="4" viewBox="0 0 9 4"><path d="M0.3,0.2 L8,1.7 L8,2.3 L0.3,3.5 Z" fill="#fff"/></svg>
<svg class="pl" style="left:414.5px;top:439.40px" width="9" height="4" viewBox="0 0 9 4"><path d="M0.3,0.2 L8,1.7 L8,2.3 L0.3,3.5 Z" fill="#fff"/></svg>
<svg class="pl" style="left:414.5px;top:451.72px" width="9" height="4" viewBox="0 0 9 4"><path d="M0.3,0.2 L8,1.7 L8,2.3 L0.3,3.5 Z" fill="#fff"/></svg>
<svg class="pl" style="left:414.5px;top:464.04px" width="9" height="4" viewBox="0 0 9 4"><path d="M0.3,0.2 L8,1.7 L8,2.3 L0.3,3.5 Z" fill="#fff"/></svg>
<svg class="pl" style="left:414.5px;top:476.36px" width="9" height="4" viewBox="0 0 9 4"><path d="M0.3,0.2 L8,1.7 L8,2.3 L0.3,3.5 Z" fill="#fff"/></svg>
<svg class="abs" style="left:256px;top:189px" width="20" height="22" viewBox="0 0 20 22" shape-rendering="crispEdges"><rect x="8" y="1" width="2" height="1" fill="#fff"/><rect x="8" y="2" width="2" height="1" fill="#fff"/><rect x="8" y="3" width="2" height="1" fill="#fff"/><rect x="8" y="4" width="2" height="1" fill="#fff"/><rect x="8" y="5" width="2" height="1" fill="#fff"/><rect x="8" y="6" width="2" height="1" fill="#fff"/><rect x="11" y="6" width="2" height="1" fill="#fff"/><rect x="8" y="7" width="2" height="1" fill="#fff"/><rect x="11" y="7" width="2" height="1" fill="#fff"/><rect x="14" y="7" width="2" height="1" fill="#fff"/><rect x="8" y="8" width="2" height="1" fill="#fff"/><rect x="11" y="8" width="2" height="1" fill="#fff"/><rect x="14" y="8" width="2" height="1" fill="#fff"/><rect x="17" y="8" width="2" height="1" fill="#fff"/><rect x="8" y="9" width="2" height="1" fill="#fff"/><rect x="11" y="9" width="2" height="1" fill="#fff"/><rect x="14" y="9" width="2" height="1" fill="#fff"/><rect x="17" y="9" width="2" height="1" fill="#fff"/><rect x="4" y="10" width="3" height="1" fill="#fff"/><rect x="8" y="10" width="11" height="1" fill="#fff"/><rect x="4" y="11" width="3" height="1" fill="#fff"/><rect x="8" y="11" width="11" height="1" fill="#fff"/><rect x="5" y="12" width="2" height="1" fill="#fff"/><rect x="8" y="12" width="11" height="1" fill="#fff"/><rect x="6" y="13" width="1" height="1" fill="#fff"/><rect x="8" y="13" width="11" height="1" fill="#fff"/><rect x="6" y="14" width="13" height="1" fill="#fff"/><rect x="7" y="15" width="12" height="1" fill="#fff"/><rect x="8" y="16" width="11" height="1" fill="#fff"/><rect x="8" y="17" width="10" height="1" fill="#fff"/><rect x="9" y="18" width="9" height="1" fill="#fff"/><rect x="9" y="19" width="9" height="1" fill="#fff"/><rect x="9" y="20" width="9" height="1" fill="#fff"/><rect x="8" y="0" width="2" height="1" fill="#000"/><rect x="7" y="1" width="1" height="1" fill="#000"/><rect x="10" y="1" width="1" height="1" fill="#000"/><rect x="7" y="2" width="1" height="1" fill="#000"/><rect x="10" y="2" width="1" height="1" fill="#000"/><rect x="7" y="3" width="1" height="1" fill="#000"/><rect x="10" y="3" width="1" height="1" fill="#000"/><rect x="7" y="4" width="1" height="1" fill="#000"/><rect x="10" y="4" width="1" height="1" fill="#000"/><rect x="7" y="5" width="1" height="1" fill="#000"/><rect x="10" y="5" width="3" height="1" fill="#000"/><rect x="7" y="6" width="1" height="1" fill="#000"/><rect x="10" y="6" width="1" height="1" fill="#000"/><rect x="13" y="6" width="3" height="1" fill="#000"/><rect x="7" y="7" width="1" height="1" fill="#000"/><rect x="10" y="7" width="1" height="1" fill="#000"/><rect x="13" y="7" width="1" height="1" fill="#000"/><rect x="16" y="7" width="3" height="1" fill="#000"/><rect x="7" y="8" width="1" height="1" fill="#000"/><rect x="10" y="8" width="1" height="1" fill="#000"/><rect x="13" y="8" width="1" height="1" fill="#000"/><rect x="16" y="8" width="1" height="1" fill="#000"/><rect x="19" y="8" width="1" height="1" fill="#000"/><rect x="4" y="9" width="4" height="1" fill="#000"/><rect x="10" y="9" width="1" height="1" fill="#000"/><rect x="13" y="9" width="1" height="1" fill="#000"/><rect x="16" y="9" width="1" height="1" fill="#000"/><rect x="19" y="9" width="1" height="1" fill="#000"/><rect x="3" y="10" width="1" height="1" fill="#000"/><rect x="7" y="10" width="1" height="1" fill="#000"/><rect x="19" y="10" width="1" height="1" fill="#000"/><rect x="3" y="11" width="1" height="1" fill="#000"/><rect x="7" y="11" width="1" height="1" fill="#000"/><rect x="19" y="11" width="1" height="1" fill="#000"/><rect x="4" y="12" width="1" height="1" fill="#000"/><rect x="7" y="12" width="1" height="1" fill="#000"/><rect x="19" y="12" width="1" height="1" fill="#000"/><rect x="5" y="13" width="1" height="1" fill="#000"/><rect x="7" y="13" width="1" height="1" fill="#000"/><rect x="19" y="13" width="1" height="1" fill="#000"/><rect x="5" y="14" width="1" height="1" fill="#000"/><rect x="19" y="14" width="1" height="1" fill="#000"/><rect x="6" y="15" width="1" height="1" fill="#000"/><rect x="19" y="15" width="1" height="1" fill="#000"/><rect x="7" y="16" width="1" height="1" fill="#000"/><rect x="19" y="16" width="1" height="1" fill="#000"/><rect x="7" y="17" width="1" height="1" fill="#000"/><rect x="18" y="17" width="1" height="1" fill="#000"/><rect x="8" y="18" width="1" height="1" fill="#000"/><rect x="18" y="18" width="1" height="1" fill="#000"/><rect x="8" y="19" width="1" height="1" fill="#000"/><rect x="18" y="19" width="1" height="1" fill="#000"/><rect x="8" y="20" width="1" height="1" fill="#000"/><rect x="18" y="20" width="1" height="1" fill="#000"/><rect x="8" y="21" width="11" height="1" fill="#000"/></svg>
</body></html>
